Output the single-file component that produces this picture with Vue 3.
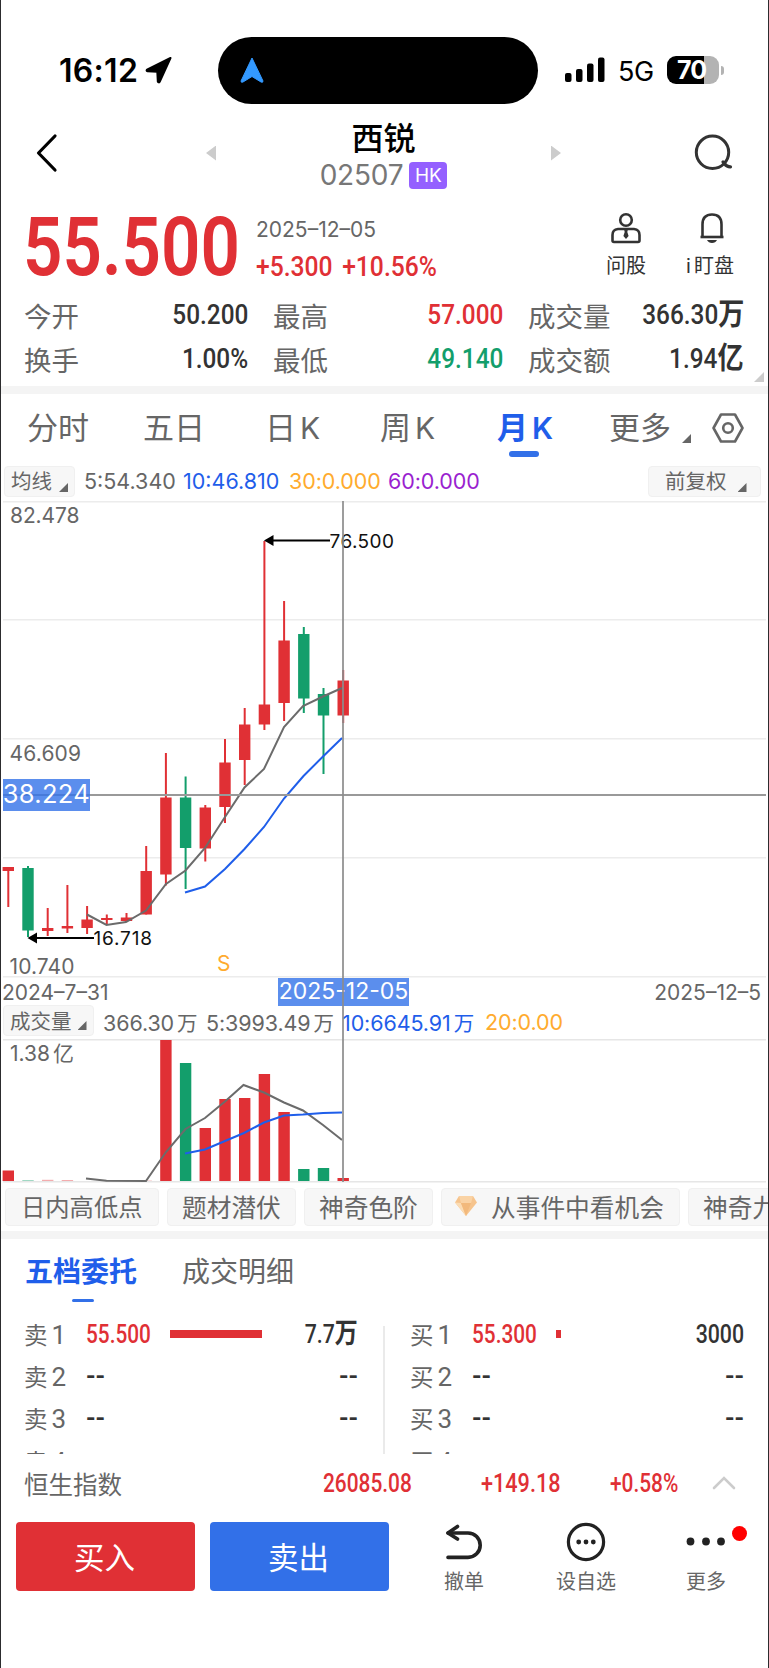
<script setup>
import { computed } from "vue";

const stats = [
  { label: "今开", value: "50.200" },
  { label: "最高", value: "57.000", tone: "up" },
  { label: "成交量", value: "366.30", unit: "万" },
  { label: "换手", value: "1.00%" },
  { label: "最低", value: "49.140", tone: "down" },
  { label: "成交额", value: "1.94", unit: "亿" },
];

const periods = ["分时", "五日", "日K", "周K", "月K"];
const activePeriod = "月K";

// high, body top, body bottom, low and volume top, in chart pixels
const candles = [
  { high: 366, top: 366, bottom: 370, low: 406, vol: 131.5, up: true },
  { high: 365, top: 367, bottom: 429.5, low: 436, vol: 141, up: false, faint: true },
  { high: 407, top: 427, bottom: 430, low: 435, vol: 140.8, up: true, faint: true },
  { high: 384, top: 425, bottom: 427.5, low: 432, vol: 141, up: true, faint: true },
  { high: 405, top: 418.5, bottom: 427, low: 433, vol: 142, up: true },
  { high: 413.5, top: 417, bottom: 419, low: 423, vol: 142, up: true },
  { high: 412, top: 416.5, bottom: 420, low: 421, vol: 142, up: true },
  { high: 345, top: 370, bottom: 413.5, low: 413.5, vol: 141.6, up: true, faint: true },
  { high: 252, top: 296.5, bottom: 373.5, low: 384.5, vol: 1, up: true },
  { high: 275.5, top: 296.5, bottom: 347, low: 388, vol: 24, up: false },
  { high: 304, top: 306.5, bottom: 347.5, low: 360.5, vol: 89, up: true },
  { high: 238, top: 261.5, bottom: 306, low: 322, vol: 60, up: true },
  { high: 207, top: 223.5, bottom: 259, low: 284, vol: 59, up: true },
  { high: 40, top: 203.5, bottom: 223.5, low: 229, vol: 35, up: true },
  { high: 100, top: 139.5, bottom: 202, low: 220, vol: 73, up: true },
  { high: 126, top: 133, bottom: 197.5, low: 212, vol: 130, up: false },
  { high: 187, top: 193, bottom: 214.5, low: 273, vol: 129, up: false },
  { high: 169, top: 179.5, bottom: 214.5, low: 222, vol: 139, up: true },
];

const bars = computed(() =>
  candles.map((candle, index) => ({
    ...candle,
    x: 8.3 + index * 19.7,
    color: candle.up ? "#e03035" : "#139e6b",
  }))
);

const gridLines = [0.7, 118.7, 237.7, 356.7, 475.7];

const chips = ["日内高低点", "题材潜伏", "神奇色阶"];

const book = [
  {
    side: "卖",
    rows: [
      { price: "55.500", qty: "7.7", unit: "万", bar: 92 },
      { price: "--", qty: "--" },
      { price: "--", qty: "--" },
      { price: "--", qty: "--" },
    ],
  },
  {
    side: "买",
    rows: [
      { price: "55.300", qty: "3000", bar: 5 },
      { price: "--", qty: "--" },
      { price: "--", qty: "--" },
      { price: "--", qty: "--" },
    ],
  },
];
</script>

<template>
  <div class="phone">
    <div class="status">
      <span class="time">16:12</span>
      <svg class="locate" width="28" height="28" viewBox="0 0 28 28">
        <path d="M25.5 2 L2 13.6 Q1 15 2.5 15.3 L12.3 15.8 L12.8 25.5 Q13.6 27.2 14.8 25.6 Z" stroke="#000" stroke-width="2" stroke-linejoin="round" />
      </svg>
      <div class="island">
        <svg width="26" height="28" viewBox="0 0 26 28">
          <path d="M13 2 L2 25 Q2 27 4 26 L13 20.5 L22 26 Q24 27 24 25 Z" fill="#3399ff" stroke="#3399ff" stroke-linejoin="round" />
        </svg>
      </div>
      <svg class="signal" width="40" height="26" viewBox="0 0 40 26">
        <rect x="0" y="16" width="6.5" height="9" rx="2" />
        <rect x="11" y="12" width="6.5" height="13" rx="2" />
        <rect x="22" y="6.5" width="6.5" height="18.5" rx="2" />
        <rect x="33" y="0.5" width="6.5" height="24.5" rx="2" />
      </svg>
      <span class="network">5G</span>
      <div class="battery"><span>70</span></div>
      <i class="battery-tip"></i>
    </div>

    <header class="header">
      <svg class="back" width="24" height="40" viewBox="0 0 24 40">
        <path d="M20 3 L3.5 20 L20 37" fill="none" stroke="#000" stroke-width="3.2" stroke-linecap="round" stroke-linejoin="round" />
      </svg>
      <i class="prev"></i>
      <div class="title">
        <h1>西锐</h1>
        <div class="code"><span>02507</span><b>HK</b></div>
      </div>
      <i class="next"></i>
      <svg class="search" width="42" height="40" viewBox="0 0 42 40">
        <circle cx="18.5" cy="19.3" r="16.2" fill="none" stroke="#333" stroke-width="3" />
        <path d="M29 29 L30.5 30.7 Q33 34 36.5 33.8" fill="none" stroke="#333" stroke-width="3.2" stroke-linecap="round" />
      </svg>
    </header>

    <section class="quote">
      <div class="quote-main">
        <div class="price"><span class="din">55.500</span></div>
        <div class="change">
          <span class="date">2025–12–05</span>
          <span class="delta din">+5.300 +10.56%</span>
        </div>
        <div class="tool ask">
          <svg width="32" height="32" viewBox="0 0 32 32" fill="none" stroke="#333" stroke-width="2.6">
            <circle cx="16" cy="8" r="5.8" />
            <path d="M8 17 H24 Q29.5 17.5 29.5 23 V28.5 Q29.5 30 28 30 H4 Q2.5 30 2.5 28.5 V23 Q2.5 17.5 8 17 Z" />
            <path d="M14 17 H18 L17.3 20 L18.6 24 L16 27 L13.4 24 L14.7 20 Z" fill="#333" stroke="none" />
          </svg>
          <span>问股</span>
        </div>
        <div class="tool watch">
          <svg width="28" height="32" viewBox="0 0 28 32">
            <path d="M4.5 25 V12.5 Q4.5 2.5 14 2.5 Q23.5 2.5 23.5 12.5 V25" fill="none" stroke="#333" stroke-width="2.6" />
            <path d="M2.5 25 H25.5" stroke="#333" stroke-width="2.6" />
            <path d="M9 28 H19 Q17.5 31 14 31 Q10.5 31 9 28 Z" fill="#333" />
          </svg>
          <span class="watch-label"><i>i</i>盯盘</span>
        </div>
      </div>
      <div class="stats">
        <div v-for="item in stats" :key="item.label" class="stat">
          <span>{{ item.label }}</span>
          <b :class="['din', item.tone]">{{ item.value }}<em v-if="item.unit">{{ item.unit }}</em></b>
        </div>
      </div>
      <i class="corner"></i>
    </section>

    <div class="divider"></div>

    <nav class="periods">
      <span
        v-for="(name, index) in periods"
        :key="name"
        :class="['period', `p${index}`, { active: name === activePeriod }]"
      >{{ name[0] }}<i v-if="name[1] === 'K'">K</i><template v-else>{{ name[1] }}</template></span>
      <span class="period more">更多<i class="tri"></i></span>
      <svg class="gear" width="34" height="32" viewBox="0 0 34 32" fill="none" stroke="#666">
        <path d="M10 2.5 H24 L31.5 16 L24 29.5 H10 L2.5 16 Z" stroke-width="2.6" stroke-linejoin="round" />
        <circle cx="17" cy="16" r="4.8" stroke-width="2.6" />
      </svg>
    </nav>

    <div class="averages">
      <span class="select">均线<i class="tri"></i></span>
      <span class="avg a5">5:54.340</span>
      <span class="avg a10">10:46.810</span>
      <span class="avg a30">30:0.000</span>
      <span class="avg a60">60:0.000</span>
      <span class="select adjust">前复权<i class="tri"></i></span>
    </div>

    <div class="charts">
      <svg class="chart" width="769" height="477" viewBox="0 0 769 477">
        <line v-for="y in gridLines" :key="y" x1="3" x2="766" :y1="y" :y2="y" stroke="#ececec" stroke-width="1.4" />
        <g v-for="bar in bars" :key="bar.x" :fill="bar.color">
          <rect :x="bar.x - 1" :y="bar.high" width="2" :height="bar.low - bar.high" />
          <rect :x="bar.x - 5.7" :y="bar.top" width="11.4" :height="bar.bottom - bar.top" />
        </g>
        <polyline points="87,413.5 106.5,424 126,421 146,409.5 166,383 185.5,369.5 205,347 225,316 244.5,286.5 264,268 284,226 303,205 323,195.5 342,187" fill="none" stroke="#6b6b6b" stroke-width="2" />
        <polyline points="185,391.5 205,385.5 225,368 244.5,348 264,326 284,297.5 303.5,275 323,255.5 342,237" fill="none" stroke="#1f5eea" stroke-width="2" />
        <g class="scale">
          <text x="10" y="22" textLength="69.5">82.478</text>
          <text x="9.5" y="260" textLength="71.5">46.609</text>
          <text x="9.5" y="473" textLength="65">10.740</text>
        </g>
        <text class="signal-mark" x="217" y="469.5">S</text>
        <g class="peak">
          <path d="M264 39.5 L273.5 34 V45 Z" />
          <path d="M272 39.5 H330" stroke="#000" stroke-width="1.8" />
          <text x="329.5" y="47" textLength="64.5">76.500</text>
          <path d="M27.5 437 L37 431.5 V442.5 Z" />
          <path d="M36 437 H94" stroke="#000" stroke-width="1.8" />
          <text x="93.5" y="444.3" textLength="58.5">16.718</text>
        </g>
        <line x1="3" x2="766" y1="294" y2="294" stroke="#999" stroke-width="2" />
        <rect x="3" y="278" width="87" height="32" fill="#3272e8" fill-opacity="0.8" />
        <text class="cursor-price" x="2.8" y="302.3" textLength="87">38.224</text>
      </svg>
      <div class="axis">
        <span>2024–7–31</span>
        <span>2025–12–5</span>
      </div>
      <div class="volume-head">
        <span class="select">成交量<i class="tri"></i></span>
        <span class="vol v0">366.30<em>万</em></span>
        <span class="vol v5">5:3993.49<em>万</em></span>
        <span class="vol v10">10:6645.91<em>万</em></span>
        <span class="vol v20">20:0.00</span>
      </div>
      <svg class="chart" width="769" height="144" viewBox="0 0 769 144">
        <line x1="3" x2="766" y1="0.7" y2="0.7" stroke="#e6e6e6" stroke-width="1.4" />
        <line x1="3" x2="766" y1="142.8" y2="142.8" stroke="#e6e6e6" stroke-width="1.4" />
        <rect
          v-for="bar in bars"
          :key="bar.x"
          :x="bar.x - 5.7"
          :y="bar.vol"
          width="11.4"
          :height="142 - bar.vol"
          :fill="bar.color"
          :opacity="bar.faint ? 0.4 : 1"
        />
        <polyline points="86,139.5 106.5,141.7 146,142 166,113 185.5,90 205,79 225,62.5 243.5,46 264,53.5 284,63.5 303,71.5 323,86 342,101" fill="none" stroke="#6b6b6b" stroke-width="2" />
        <polyline points="185,114.5 205,110.5 225,102 244,94 264,83.5 284,76.5 303,75.5 323,74 342,73.6" fill="none" stroke="#1f5eea" stroke-width="2" />
        <text class="vol-scale" x="10" y="21.5">1.38<tspan dx="3">亿</tspan></text>
      </svg>
      <span class="cursor-date">2025-12-05</span>
      <i class="cursor-line"></i>
    </div>

    <div class="chips">
      <span v-for="chip in chips" :key="chip" class="chip">{{ chip }}</span>
      <span class="chip event">
        <svg width="24" height="22" viewBox="0 0 24 22">
          <path d="M5 1 H19 L23 7.5 L12 21 L1 7.5 Z" fill="#f6c48d" />
          <path d="M1 7.5 L7 8 L12 21 Z" fill="#fbdcb4" />
          <path d="M7 8 H17 L12 21 Z" fill="#f2b97c" />
          <path d="M5 1 L7 8 H17 L19 1 Z" fill="#fad3a5" />
        </svg>
        从事件中看机会
      </span>
      <span class="chip last">神奇九转</span>
    </div>

    <div class="divider"></div>

    <nav class="book-tabs">
      <span class="active">五档委托</span>
      <span>成交明细</span>
    </nav>

    <section class="book">
      <div v-for="part in book" :key="part.side" class="side">
        <div v-for="(row, index) in part.rows" :key="index" class="order">
          <span class="level">{{ part.side }}<i>{{ index + 1 }}</i></span>
          <span :class="['order-price', 'din', row.bar ? 'up' : 'blank']">{{ row.price }}</span>
          <span class="track"><i v-if="row.bar" :style="{ width: row.bar + 'px' }"></i></span>
          <b :class="['qty', 'din', { blank: !row.bar }]">{{ row.qty }}<em v-if="row.unit">{{ row.unit }}</em></b>
        </div>
      </div>
    </section>

    <div class="index">
      <span class="index-name">恒生指数</span>
      <span class="din i1">26085.08</span>
      <span class="din i2">+149.18</span>
      <span class="din i3">+0.58%</span>
      <svg width="26" height="16" viewBox="0 0 26 16">
        <path d="M3 13 L13 3 L23 13" fill="none" stroke="#ccc" stroke-width="2.6" stroke-linecap="round" />
      </svg>
    </div>

    <footer class="actions">
      <button class="buy">买入</button>
      <button class="sell">卖出</button>
      <div class="action undo">
        <svg width="42" height="38" viewBox="0 0 42 38" fill="none" stroke="#222" stroke-width="3.6" stroke-linecap="round" stroke-linejoin="round">
          <path d="M14.5 4.5 L5 11 L14.5 17" />
          <path d="M5 11 H25 A12.2 12.2 0 0 1 25 35.4 H5" />
        </svg>
        <span>撤单</span>
      </div>
      <div class="action pick">
        <svg width="40" height="40" viewBox="0 0 40 40" fill="#222">
          <circle cx="20" cy="20" r="17.6" fill="none" stroke="#222" stroke-width="3.2" />
          <circle cx="12.7" cy="20" r="2.4" />
          <circle cx="20" cy="20" r="2.4" />
          <circle cx="27.3" cy="20" r="2.4" />
        </svg>
        <span>设自选</span>
      </div>
      <div class="action rest">
        <svg width="42" height="38" viewBox="0 0 42 38" fill="#222">
          <circle cx="5.5" cy="19.5" r="3.9" />
          <circle cx="21" cy="19.5" r="3.9" />
          <circle cx="36" cy="19.5" r="3.9" />
        </svg>
        <span>更多</span>
        <i class="dot"></i>
      </div>
    </footer>
  </div>
</template>

<style>
body {
  margin: 0;
  background: #fff;
}
</style>

<style scoped>
.phone {
  box-sizing: border-box;
  position: relative;
  width: 769px;
  height: 1668px;
  overflow: hidden;
  background: #fff;
  color: #666;
  font-family: Inter, "Noto Sans CJK SC", sans-serif;
  white-space: nowrap;
}

/* thin screen edge on both sides */
.phone::after {
  content: "";
  position: absolute;
  inset: 0;
  border: solid #2c2c2e;
  border-width: 0 1px;
  pointer-events: none;
}

i,
em {
  font-style: normal;
}

svg {
  display: block;
  flex: none;
}

.din {
  display: inline-block;
  font-family: Roboto, "Noto Sans CJK SC", sans-serif;
  font-weight: 500;
}

.up {
  color: #e03035;
}

.down {
  color: #139e6b;
}

.tri {
  display: block;
  width: 9px;
  height: 9px;
  background: #666;
  clip-path: polygon(100% 0, 100% 100%, 0 100%);
}

/* Status bar */
.status {
  display: flex;
  align-items: center;
  height: 68px;
  padding: 36px 0 8px 59px;
  color: #000;
}

.time {
  width: 86px;
  font-size: 32px;
  font-weight: 600;
  letter-spacing: 0.3px;
}

.island {
  display: flex;
  align-items: center;
  box-sizing: border-box;
  width: 320px;
  height: 67px;
  margin: 0 27px 0 45px;
  padding-left: 21px;
  border-radius: 34px;
  background: #000;
}

.network {
  width: 35px;
  margin: 2px 14px 0 13px;
  font-size: 27px;
  font-weight: 400;
  letter-spacing: -0.5px;
}

.battery {
  width: 52px;
  height: 28px;
  border-radius: 9px;
  background: linear-gradient(90deg, #000 37px, #b3b3b3 37px);
  color: #fff;
  font-size: 25px;
  font-weight: 700;
  line-height: 28px;
  text-align: center;
  letter-spacing: -1px;
}

.battery span {
  margin-right: 3px;
}

.battery-tip {
  width: 3px;
  height: 9px;
  margin-left: 2px;
  border-radius: 0 3px 3px 0;
  background: #b3b3b3;
}

/* Header */
.header {
  display: flex;
  align-items: center;
  height: 82px;
  padding: 0 0 6px 35px;
}

.prev,
.next {
  width: 10px;
  height: 15px;
  background: #ccc;
}

.prev {
  margin-left: 147px;
  clip-path: polygon(100% 0, 100% 100%, 0 50%);
}

.next {
  clip-path: polygon(0 0, 100% 50%, 0 100%);
}

.title {
  width: 335px;
  padding-top: 6px;
  text-align: center;
}

.title h1 {
  margin: 0;
  color: #000;
  font-size: 32px;
  font-weight: 500;
  line-height: 38px;
}

.code {
  display: flex;
  align-items: center;
  justify-content: center;
  gap: 6px;
  height: 34px;
  color: #777;
  font-size: 28px;
  letter-spacing: -0.2px;
}

.code b {
  width: 38px;
  height: 27px;
  border-radius: 4px;
  background: #9460ff;
  color: #fff;
  font-size: 19px;
  font-weight: 400;
  line-height: 28px;
}

.search {
  margin-left: 133px;
}

/* Quote */
.quote {
  position: relative;
  height: 186px;
  padding: 0 25px 0 24px;
}

.quote-main {
  display: flex;
  height: 90px;
  padding-top: 3px;
}

.price {
  width: 232px;
  height: 90px;
  color: #e03035;
  font-size: 81px;
  line-height: 87px;
}

.price .din {
  margin-left: -1px;
  font-weight: 600;
  transform: scaleX(0.853);
  transform-origin: left;
}

.change {
  display: flex;
  flex-direction: column;
  width: 345px;
}

.date {
  padding-top: 13px;
  font-size: 21px;
  line-height: 28px;
}

.delta {
  align-self: flex-start;
  margin-top: 5px;
  color: #e03035;
  font-size: 28px;
  line-height: 36px;
  word-spacing: 4px;
  transform: scaleX(0.88);
  transform-origin: left;
}

.tool {
  display: flex;
  flex-direction: column;
  align-items: center;
  gap: 10px;
  padding-top: 9px;
  color: #333;
  font-size: 20px;
  line-height: 24px;
}

.ask {
  width: 50px;
}

.watch {
  width: 54px;
  margin-left: 34px;
}

.watch-label {
  margin-left: -4px;
}

.watch-label i {
  margin-right: 3px;
}

.stats {
  display: grid;
  grid-template-columns: 224px 230px 216px;
  column-gap: 25px;
  grid-auto-rows: 44px;
}

.stat {
  display: flex;
  align-items: center;
  justify-content: space-between;
  font-size: 27.5px;
}

.stat b {
  color: #333;
  font-size: 28px;
  font-weight: 550;
  line-height: 40px;
  transform: scaleX(0.87);
  transform-origin: right;
}

.stat em {
  font-size: 30px;
  font-weight: 600;
  line-height: 1;
}

.stat b.up {
  color: #e03035;
}

.stat b.down {
  color: #139e6b;
}

.corner {
  position: absolute;
  right: 5px;
  bottom: 4px;
  width: 10px;
  height: 10px;
  background: #ccc;
  clip-path: polygon(100% 0, 100% 100%, 0 100%);
}

.divider {
  height: 8px;
  background: #f4f4f4;
}

/* Period tabs */
.periods {
  display: flex;
  height: 68px;
  padding-left: 27px;
  font-size: 31px;
  line-height: 68px;
}

.period {
  position: relative;
  flex: none;
  width: 116px;
}

.period i:not(.tri) {
  margin-left: 4px;
  font-size: 30px;
}

.p1 {
  width: 122px;
}

.p2 {
  width: 115px;
}

.p3 {
  width: 117px;
}

.p4 {
  width: 112px;
}

.period.active {
  color: #1f5eea;
  font-weight: 600;
}

.period.active::after {
  content: "";
  position: absolute;
  left: 12px;
  bottom: 5px;
  width: 30px;
  height: 6px;
  border-radius: 3px;
  background: #3270e8;
}

.more {
  display: flex;
  align-items: flex-end;
  width: 102px;
}

.more .tri {
  margin: 0 0 19px 11px;
}

.gear {
  margin-top: 18px;
}

/* Moving averages */
.averages,
.volume-head {
  display: flex;
  align-items: center;
  font-size: 21.5px;
}

.averages {
  height: 39px;
}

.select {
  display: flex;
  align-items: flex-end;
  box-sizing: border-box;
  height: 31px;
  border: 1px solid #f0f0f0;
  border-radius: 4px;
  background: #f7f7f7;
  font-size: 20.5px;
  line-height: 29px;
}

.select .tri {
  margin-bottom: 4px;
}

.averages .select {
  width: 71px;
  margin-left: 4px;
  padding-left: 6px;
  gap: 7px;
}

.averages .adjust {
  width: 113px;
  margin-left: 170px;
  padding-left: 16px;
  gap: 11px;
}

.avg {
  width: 99px;
  margin-top: -2px;
}

.a5 {
  margin-left: 9px;
}

.a10 {
  width: 106px;
  color: #1f5eea;
}

.a30 {
  color: #ffab2e;
}

.a60 {
  width: 90px;
  color: #9a1fd0;
}

.a30,
.a60 {
  letter-spacing: -0.1px;
}

/* Charts */
.charts {
  position: relative;
}

.scale,
.vol-scale {
  fill: #666;
  font-size: 21px;
}

.signal-mark {
  fill: #ffab2e;
  font-size: 21px;
}

.peak text {
  fill: #111;
  font-size: 19px;
}

.cursor-price {
  fill: #fff;
  font-size: 25.5px;
}

.axis {
  display: flex;
  justify-content: space-between;
  height: 27px;
  padding: 0 8px 0 2px;
  font-size: 21px;
  line-height: 30px;
}

.volume-head {
  height: 34px;
  font-size: 21.5px;
}

.volume-head .select {
  align-self: flex-start;
  width: 91px;
  margin-left: 3px;
  padding-left: 6px;
  gap: 6px;
  line-height: 27px;
}

.volume-head .tri {
  margin-bottom: 5px;
}

.vol {
  letter-spacing: -0.1px;
}

.vol em {
  margin-left: 3px;
  font-size: 20.5px;
}

.v0 {
  width: 103px;
  margin-left: 9px;
}

.v5 {
  width: 136px;
}

.v10 {
  width: 143px;
  color: #1f5eea;
}

.v20 {
  color: #ffab2e;
}

.cursor-date {
  position: absolute;
  left: 278px;
  top: 477px;
  width: 131px;
  height: 28px;
  background: rgba(50, 114, 232, 0.8);
  color: #fff;
  font-size: 23px;
  line-height: 26px;
  text-align: center;
}

.cursor-line {
  position: absolute;
  left: 342px;
  top: 0;
  width: 2px;
  height: 681px;
  background: rgba(140, 140, 140, 0.85);
}

/* Strategy chips */
.chips {
  display: flex;
  gap: 8px;
  height: 43px;
  padding: 5px 0 0 5px;
  overflow: hidden;
}

.chip {
  display: flex;
  flex: none;
  align-items: center;
  box-sizing: border-box;
  width: 129px;
  height: 38px;
  padding: 0 0 3px 14px;
  border: 1px solid #f0f0f0;
  border-radius: 4px;
  background: #f7f7f7;
  font-size: 24.7px;
}

.chip:first-child {
  width: 154px;
  padding-left: 15px;
  font-size: 24.3px;
}

.event {
  gap: 13px;
  width: 239px;
  padding-left: 12px;
}

/* Order book */
.book-tabs {
  display: flex;
  gap: 45px;
  height: 71px;
  padding-left: 25px;
  font-size: 28px;
  line-height: 66px;
}

.book-tabs .active {
  position: relative;
  color: #1f5eea;
  font-weight: 700;
}

.book-tabs .active::after {
  content: "";
  position: absolute;
  left: 47px;
  top: 60px;
  width: 22px;
  height: 3px;
  border-radius: 2px;
  background: #3270e8;
}

.book {
  display: flex;
  box-sizing: border-box;
  height: 144px;
  padding: 3px 25px 0 24px;
  overflow: hidden;
}

.side {
  width: 334px;
}

.side + .side {
  position: relative;
  width: 334px;
  margin-left: 52px;
}

.side + .side::before {
  content: "";
  position: absolute;
  left: -27px;
  top: 13px;
  width: 1.5px;
  height: 140px;
  background: #eaeaea;
}

.order {
  display: flex;
  align-items: center;
  height: 42.2px;
}

.level {
  width: 62px;
  font-size: 23.5px;
}

.level i {
  margin-left: 4px;
  font-family: Roboto, sans-serif;
  font-size: 26px;
}

.order-price {
  width: 84px;
  color: #333;
  font-size: 26px;
  font-weight: 550;
  transform: scaleX(0.8);
  transform-origin: left;
}

.order-price.up {
  color: #e03035;
}

.track i {
  display: block;
  height: 8px;
  background: #e03035;
}

.qty {
  margin-left: auto;
  color: #333;
  font-size: 26px;
  font-weight: 550;
  line-height: 40px;
  transform: scaleX(0.82);
  transform-origin: right;
}

.qty em {
  font-weight: 600;
  font-size: 28px;
  line-height: 1;
}

.order .blank {
  font-weight: 600;
  transform: scaleX(1);
}

/* Index ticker */
.index {
  display: flex;
  align-items: center;
  height: 58px;
  padding: 0 0 2px 24px;
  color: #e03035;
  font-size: 25px;
}

.index .din {
  transform: scaleX(0.835);
  transform-origin: left;
}

.index-name {
  width: 299px;
  color: #666;
  font-size: 24.5px;
}

.i1 {
  width: 158px;
}

.index .i2 {
  width: 129px;
  transform: scaleX(0.865);
}

.i3 {
  width: 101px;
}

/* Bottom actions */
.actions {
  display: flex;
  height: 78px;
  padding: 8px 0 0 16px;
}

.actions button {
  width: 179px;
  height: 69px;
  margin-right: 15px;
  padding: 0 2px 0 0;
  border: 0;
  border-radius: 4px;
  color: #fff;
  font: 30.5px/72px Inter, "Noto Sans CJK SC", sans-serif;
}

.buy {
  background: #e03035;
}

.sell {
  background: #3270e8;
}

.action {
  position: relative;
  display: flex;
  flex-direction: column;
  align-items: center;
  width: 64px;
  font-size: 20px;
  line-height: 24px;
}

.action span {
  margin-top: auto;
  padding-bottom: 6px;
}

.undo {
  margin-left: 28px;
}

.pick {
  margin-left: 58px;
}

.rest {
  margin-left: 56px;
}

.dot {
  position: absolute;
  right: -9px;
  top: 4px;
  width: 15px;
  height: 15px;
  border-radius: 50%;
  background: #f00;
}
</style>
